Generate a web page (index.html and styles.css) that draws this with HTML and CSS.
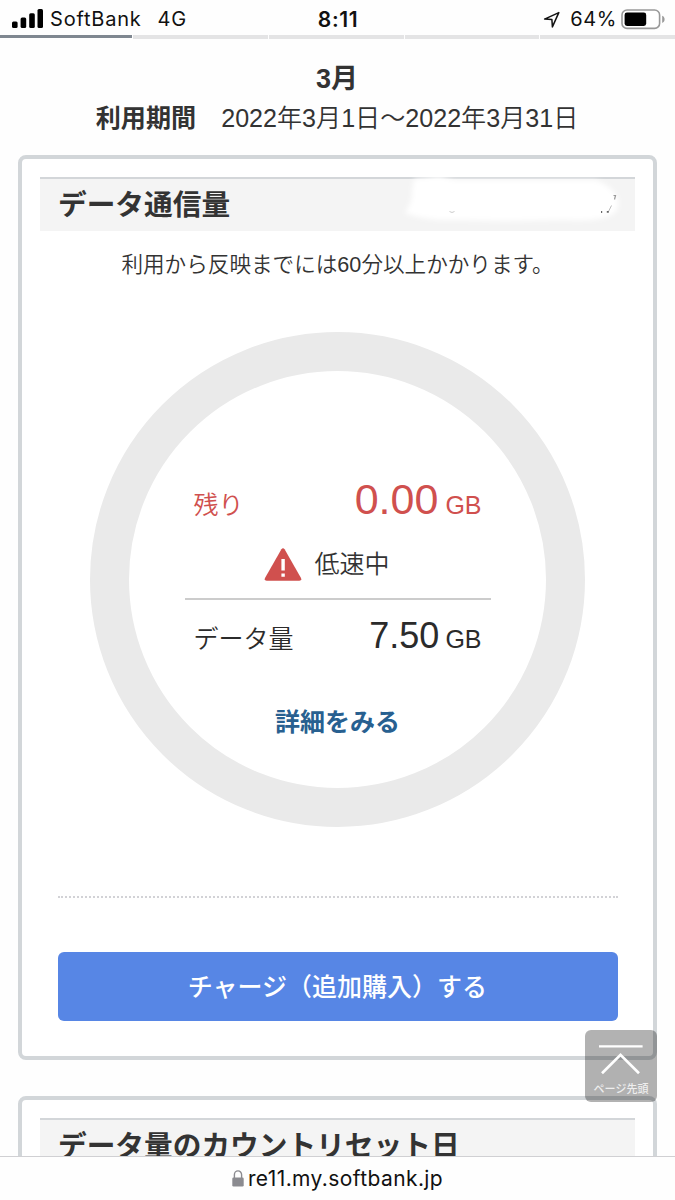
FILE: index.html
```html
<!DOCTYPE html>
<html lang="ja">
<head>
<meta charset="utf-8">
<title>データ通信量</title>
<link rel="stylesheet" href="styles.css">
</head>
<body>
<header class="status">
  <div class="status-left">
    <svg class="signal" viewBox="0 0 31 20" width="31" height="20"><rect x="0" y="12.5" width="5.6" height="6.5" rx="1.5"/><rect x="8.6" y="8.5" width="5.6" height="10.5" rx="1.5"/><rect x="17.2" y="4.2" width="5.6" height="14.8" rx="1.5"/><rect x="25.5" y="0" width="5.5" height="19" rx="1.5"/></svg>
    <span class="carrier">SoftBank</span>
    <span class="network">4G</span>
  </div>
  <span class="clock">8:11</span>
  <div class="status-right">
    <svg class="location" viewBox="0 0 18 18" width="18" height="18"><path d="M1.6 8.1 15.8 1.6 9.4 15.9 8.9 8.6Z"/></svg>
    <span class="percent">64%</span>
    <svg class="battery" viewBox="0 0 46 21" width="46" height="21"><rect class="shell" x="1" y="1" width="37.6" height="18.4" rx="5"/><rect x="3.6" y="3.6" width="21.6" height="13.4" rx="2.4"/><path class="tip" d="M41.2 6.8c3.2 1.2 3.2 6 0 7.2z"/></svg>
  </div>
</header>
<div class="tabs"><i class="tab active"></i><i class="tab"></i><i class="tab"></i><i class="tab"></i><i class="tab"></i></div>
<main class="page">
  <h1 class="month">3月</h1>
  <p class="period"><b>利用期間</b>　2022年3月1日〜2022年3月31日</p>
  <section class="card usage">
    <h2 class="card-head">データ通信量
      <svg class="mask" viewBox="0 0 240 56" width="240" height="56"><defs><filter id="soft" x="-10%" y="-20%" width="120%" height="140%"><feGaussianBlur stdDeviation="2.6"/></filter></defs><path filter="url(#soft)" fill="#fff" d="M19 2 44 -1 60 3 100 3 160 3 200 3Q216 8 222 20Q226 31 218 37Q205 45 170 43L110 44 60 43Q30 44 10 36Q18 24 17 14Z"/><path d="M218.5 18.5h2l-1 4" fill="none" stroke="#999" stroke-width="1.2"/><path d="M216.5 28.5l-3 6" fill="none" stroke="#bbb" stroke-width="1"/><path d="M211.8 34.8h2M206 35h1.2" fill="none" stroke="#666" stroke-width="1.8"/><path d="M54.5 34.5q2.5 2 5 0" fill="none" stroke="#ccc"/></svg>
    </h2>
    <p class="note">利用から反映までには60分以上かかります。</p>
    <div class="ring">
      <div class="row remain"><span>残り</span><span class="value"><span class="big">0.00</span>GB</span></div>
      <div class="slow">
        <svg viewBox="0 0 38 33" width="38" height="33"><path class="tri" d="M17.4 1.2Q19 -.9 20.6 1.2L37 30Q38 32.6 35.4 32.8H2.6Q0 32.6 1 30Z"/><path class="mark" d="M17.4 11h3.4v11.5h-3.4zM17.4 25.6h3.4v3.2h-3.4z"/></svg>
        <span>低速中</span>
      </div>
      <div class="row total"><span>データ量</span><span class="value"><span class="mid">7.50</span>GB</span></div>
      <a class="detail">詳細をみる</a>
    </div>
    <hr class="rule">
    <button class="charge">チャージ（追加購入）する</button>
  </section>
  <section class="card reset">
    <h2 class="card-head">データ量のカウントリセット日</h2>
  </section>
</main>
<a class="to-top">
  <svg viewBox="0 0 72 56" width="72" height="56"><path d="M14 16.3H57.6" stroke-width="2.2"/><path d="M17 43.2 35.5 24.8 54 43.2" stroke-width="2.7"/></svg>
  <span>ページ先頭</span>
</a>
<footer class="address">
  <svg viewBox="0 0 12 17" width="12" height="17"><path d="M2.4 8V4.8a3.6 3.9 0 0 1 7.2 0V8" fill="none" stroke="#8b8b90" stroke-width="1.4"/><rect x=".3" y="7.4" width="11.4" height="9.2" rx="1.4" fill="#8b8b90"/></svg>
  <span>re11.my.softbank.jp</span>
</footer>
</body>
</html>
```
FILE: styles.css
```css
* { box-sizing: border-box; margin: 0; padding: 0; }
body {
  width: 675px; height: 1200px; overflow: hidden; position: relative;
  display: flex; flex-direction: column;
  background: #fefefe; color: #333;
  font-family: "Liberation Sans", "Noto Sans CJK JP", sans-serif;
  font-size: 25px;
}
.status {
  height: 35px; flex: none; padding: 2px 11px 0 12px;
  display: grid; grid-template-columns: 1fr auto 1fr; align-items: center;
  font-family: Inter, sans-serif; font-size: 20px; line-height: 35px; color: #111;
}
.status-left, .status-right { display: flex; align-items: center; }
.status-right { justify-content: flex-end; }
.signal { margin-top: -1px; }
.carrier { margin-left: 7px; letter-spacing: .8px; }
.network { margin-left: 16px; letter-spacing: .6px; }
.clock { font-weight: 600; font-size: 21px; letter-spacing: .6px; }
.location { fill: none; stroke: #111; stroke-width: 1.5; stroke-linejoin: round; margin-right: 9px; }
.percent { letter-spacing: .6px; }
.battery { margin-left: 4px; margin-right: -3px; }
.shell { fill: #fff; stroke: #999; stroke-width: 1.6; }
.tip { fill: #999; }
.tabs { height: 4px; flex: none; display: flex; gap: 1px; }
.tab { flex: 1; background: #e4e4e5; }
.tab.active { background: #7f8790; height: 3px; flex: 0 0 132px; }
.page { flex: 1; min-height: 0; overflow: hidden; padding: 22px 18px 0; }
.month { font-size: 27px; line-height: 36px; padding-right: 1px; text-align: center; }
.period { line-height: 42px; height: 40px; padding-right: 1px; text-align: center; font-size: 25.1px; font-weight: 350; white-space: nowrap; }
.period b { font-weight: 700; }
.card { border: 4px solid #d2d6d9; border-radius: 8px; padding: 18px; background: #fff; }
.usage { margin-top: 18px; height: 905px; display: flex; flex-direction: column; align-items: center; }
.card-head {
  position: relative; width: 100%; height: 54px; flex: none; padding-left: 18px;
  border-top: 2px solid #d3d6d9; background: #f4f4f4;
  font-size: 28.7px; line-height: 53px; white-space: nowrap;
}
.mask { position: absolute; right: 0; top: -2px; overflow: visible; }
.note { margin-top: 14px; font-size: 21.6px; line-height: 40px; font-weight: 350; }
.ring {
  width: 495px; height: 495px; flex: none; margin-top: 47px; padding-top: 103px;
  border: 39px solid #eaeaea; border-radius: 50%;
  display: flex; flex-direction: column; align-items: center; font-weight: 350;
}
.row { width: 306px; display: flex; justify-content: space-between; align-items: baseline; padding: 0 9px; }
.remain { height: 55px; color: #d0504e; line-height: 50px; }
.value { font-weight: 400; }
.big { font-size: 43px; margin-right: 7px; }
.mid { font-size: 36px; margin-right: 6px; }
.slow { width: 306px; height: 71px; display: flex; align-items: center; padding: 1px 0 0 79px; gap: 13px; border-bottom: 2px solid #ccc; }
.slow span { margin-top: -4px; }
.tri { fill: #d0504e; }
.mark { fill: #fff; }
.total { height: 54px; margin-top: 13px; line-height: 46px; color: #2b2b2b; }
.detail { margin-top: 33px; line-height: 44px; color: #286090; font-weight: 700; }
.rule { width: 560px; margin-top: auto; border: 0; border-top: 2px dotted #d2d2d6; }
.charge {
  width: 560px; height: 69px; margin: 54px 0 17px; border: 0; border-radius: 6px;
  background: #5786e5; color: #fff; font: 500 25px/67px "Noto Sans CJK JP", sans-serif;
  padding-bottom: 2px;
}
.reset { margin-top: 36px; height: 200px; }
.to-top {
  position: absolute; left: 585px; top: 1030px; width: 72px; height: 72px;
  border-radius: 6px; background: rgba(0, 0, 0, .3);
  color: #eee; font-size: 11px; text-align: center;
}
.to-top svg { display: block; fill: none; stroke: #fff; }
.to-top span { display: block; margin-top: -8px; line-height: 20px; font-family: "Noto Sans CJK JP", sans-serif; font-weight: 500; }
.address {
  height: 44px; flex: none; border-top: 1px solid #d0d0d3; background: #fefefe;
  display: flex; justify-content: center; align-items: center; gap: 4px;
  font-family: Inter, sans-serif; font-size: 21px; letter-spacing: .4px; color: #111;
}
```
